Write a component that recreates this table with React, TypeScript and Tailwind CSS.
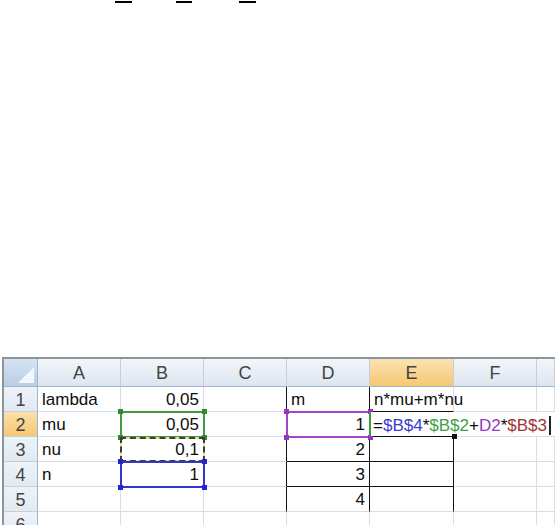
import React from "react";

const rows: string[][] = [
  ["lambda", "0,05", "", "m", "n*mu+m*nu", "", ""],
  ["mu", "0,05", "", "1", "", "", ""],
  ["nu", "0,1", "", "2", "", "", ""],
  ["n", "1", "", "3", "", "", ""],
  ["", "", "", "4", "", "", ""],
  ["", "", "", "", "", "", ""],
];

const heads = ["A", "B", "C", "D", "E", "F", ""];

function Handles({ color }: { color: string }) {
  return (
    <>
      <span className={`absolute -left-[4px] -top-[4px] h-[5px] w-[5px] ${color}`} />
      <span className={`absolute -right-[4px] -top-[4px] h-[5px] w-[5px] ${color}`} />
      <span className={`absolute -left-[4px] -bottom-[4px] h-[5px] w-[5px] ${color}`} />
      <span className={`absolute -right-[4px] -bottom-[4px] h-[5px] w-[5px] ${color}`} />
    </>
  );
}

export default function App() {
  return (
    <div className="h-[525px] w-[555px] overflow-hidden bg-white font-['Liberation_Sans',Arial,sans-serif] text-[17px] leading-[20px] text-[#0d0d0d]">
      {/* bits of a formula cut off at the top */}
      <div className="flex pl-[115px] pt-[1px]">
        <span className="h-[2px] w-[17px] bg-black" />
        <span className="ml-[44px] h-[2px] w-[16px] bg-black" />
        <span className="ml-[47px] h-[2px] w-[17px] bg-black" />
      </div>

      <div className="relative ml-[2px] mt-[354px] border-l-2 border-t-2 border-[#8c949c]">
        <div className="grid grid-cols-[34px_83px_83px_83px_83px_84px_83px_1fr] grid-rows-[28px_repeat(6,25px)]">
          {/* corner */}
          <div className="relative border-b border-r border-[#9eb6ce] bg-gradient-to-b from-[#d6e3f2] to-[#b9cde5]">
            <svg className="absolute bottom-[3px] right-[3px]" width="16" height="16" viewBox="0 0 16 16">
              <polygon points="16,0 16,16 0,16" fill="#f3f7fb" />
            </svg>
          </div>
          {heads.map((h, i) => (
            <div
              key={h + i}
              className={`flex items-end justify-center border-b border-r border-b-[#9eb6ce] border-r-[#c5ced9] pb-[3px] text-[18px] text-[#444] ${
                h === "E"
                  ? "bg-gradient-to-b from-[#fbe3b2] to-[#f5c771]"
                  : "bg-gradient-to-b from-[#f3f6fa] to-[#dde5ef]"
              }`}
            >
              {h}
            </div>
          ))}

          {rows.map((r, ri) => {
            const n = ri + 1;
            return (
              <React.Fragment key={n}>
                <div
                  className={`flex items-end justify-center border-b border-r border-b-[#c5ced9] border-r-[#9eb6ce] pb-[1px] text-[18px] text-[#444] ${
                    n === 2
                      ? "bg-gradient-to-b from-[#fbe0a8] to-[#f6c873]"
                      : "bg-gradient-to-b from-[#eef3f9] to-[#e2e9f2]"
                  }`}
                >
                  {n}
                </div>
                {r.map((v, ci) => {
                  const num = /^[\d,]+$/.test(v);
                  const blackR = n <= 5 && (ci === 2 || ci === 3 || (ci === 4 && n >= 2));
                  const blackB = n <= 4 && (ci === 3 || ci === 4);
                  return (
                    <div
                      key={ci}
                      className={`flex items-end whitespace-nowrap border-b border-r px-[4px] pb-[1px] ${
                        num ? "justify-end" : "justify-start"
                      } ${blackR ? "border-r-[#111]" : "border-r-[#d8dee6]"} ${
                        blackB ? "border-b-[#111]" : "border-b-[#d8dee6]"
                      }`}
                    >
                      {v}
                    </div>
                  );
                })}
              </React.Fragment>
            );
          })}
        </div>

        {/* B2 reference */}
        <div className="absolute left-[116px] top-[52px] h-[27px] w-[85px] border-2 border-[#3f9a40]">
          <Handles color="bg-[#2f8a30]" />
        </div>
        {/* B3 copy marquee */}
        <div className="absolute left-[116px] top-[78px] h-[25px] w-[85px] border-2 border-[#ece27a]">
          <div className="absolute -inset-[2px] border-2 border-dashed border-[#3c3c3c]" />
        </div>
        {/* B4 reference */}
        <div className="absolute left-[116px] top-[102px] h-[27px] w-[85px] border-2 border-[#3434d6]">
          <Handles color="bg-[#2323d0]" />
        </div>
        {/* D2 reference */}
        <div className="absolute left-[282px] top-[52px] h-[27px] w-[85px] border-2 border-[#a446c4]">
          <Handles color="bg-[#9a34c0]" />
        </div>

        {/* E2 edit */}
        <div className="absolute left-[365px] top-[53px] flex h-[24px] w-[186px] items-end border-l-2 border-[#3e9a3e] bg-white pl-[2px]">
          <span>=</span>
          <span className="text-[#3b3bd2]">$B$4</span>
          <span>*</span>
          <span className="text-[#3f9f45]">$B$2</span>
          <span>+</span>
          <span className="text-[#9838c0]">D2</span>
          <span>*</span>
          <span className="text-[#a13434]">$B$3</span>
          <span className="mb-[1px] ml-[2px] h-[19px] w-[2px] bg-[#222]" />
        </div>
        <span className="absolute left-[448px] top-[75px] h-[5px] w-[5px] bg-[#111]" />
      </div>
    </div>
  );
}
